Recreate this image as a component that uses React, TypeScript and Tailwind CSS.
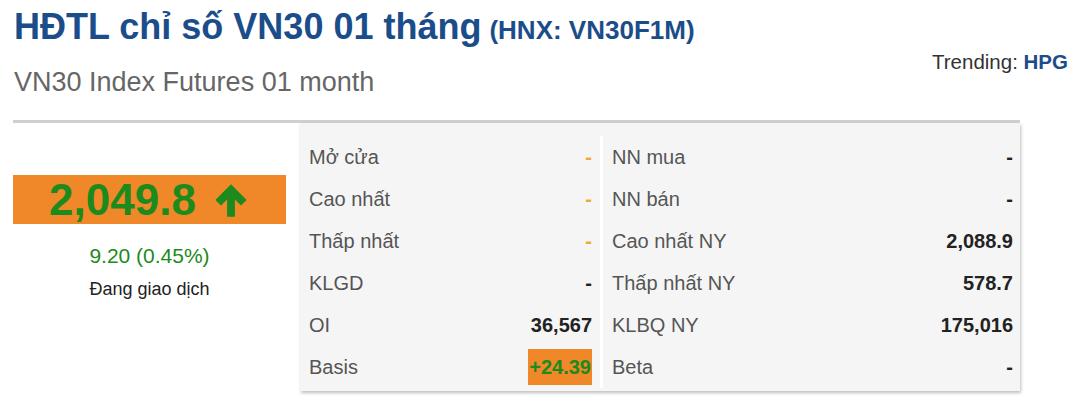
import React from 'react'

const font = { fontFamily: '"Liberation Sans", Arial, sans-serif' }

type Row = { label: string; value: string; kind?: 'orange' | 'basis' }

const leftRows: Row[] = [
  { label: 'Mở cửa', value: '-', kind: 'orange' },
  { label: 'Cao nhất', value: '-', kind: 'orange' },
  { label: 'Thấp nhất', value: '-', kind: 'orange' },
  { label: 'KLGD', value: '-' },
  { label: 'OI', value: '36,567' },
  { label: 'Basis', value: '+24.39', kind: 'basis' },
]

const rightRows: Row[] = [
  { label: 'NN mua', value: '-' },
  { label: 'NN bán', value: '-' },
  { label: 'Cao nhất NY', value: '2,088.9' },
  { label: 'Thấp nhất NY', value: '578.7' },
  { label: 'KLBQ NY', value: '175,016' },
  { label: 'Beta', value: '-' },
]

const Value: React.FC<{ row: Row }> = ({ row }) => {
  if (row.kind === 'orange') return <span className="font-bold text-[#f0a830]">{row.value}</span>
  if (row.kind === 'basis')
    return <span className="bg-[#f0882a] px-[1px] py-[3px] font-bold text-[#1c8a1c]">{row.value}</span>
  return <span className="font-bold text-[#222]">{row.value}</span>
}

const Column: React.FC<{ rows: Row[]; className?: string }> = ({ rows, className }) => (
  <div className={className}>
    {rows.map((r) => (
      <div key={r.label} className="flex h-[42px] items-center justify-between">
        <span className="text-[#555]">{r.label}</span>
        <Value row={r} />
      </div>
    ))}
  </div>
)

const ArrowUp = () => (
  <svg width="38" height="38" viewBox="0 0 34 34" className="ml-[16px]">
    <path d="M17 3 L31 17 L26 22 L20.5 16.5 L20.5 32 L13.5 32 L13.5 16.5 L8 22 L3 17 Z" fill="#1c8a1c" />
  </svg>
)

export default function App() {
  return (
    <div className="h-[406px] w-[1072px] overflow-hidden bg-white" style={font}>
      <div className="flex justify-between pl-[14px] pr-[4px]">
        <div>
          <div className="mt-[6px] flex items-baseline text-[#1b4d8a]">
            <span className="text-[36px] font-bold leading-[42px]">HĐTL chỉ số VN30 01 tháng</span>
            <span className="ml-[8px] text-[26px] font-bold">(HNX: VN30F1M)</span>
          </div>
          <div className="mt-[16px] text-[27px] leading-[32px] text-[#666]">VN30 Index Futures 01 month</div>
        </div>
        <div className="mt-[47px] text-[20.5px] text-[#333]">
          Trending: <span className="font-bold text-[#1b4d8a]">HPG</span>
        </div>
      </div>

      <div className="ml-[13px] mt-[22px] h-[3px] w-[1007px] bg-[#cfcfcf]" />

      <div className="flex">
        <div className="ml-[13px] w-[273px] pt-[52px] text-center">
          <div className="flex h-[49px] items-center justify-center bg-[#f0882a] text-[44px] font-bold text-[#1c8a1c]">
            2,049.8
            <ArrowUp />
          </div>
          <div className="mt-[16px] text-[21px] text-[#1c8a1c]">9.20 (0.45%)</div>
          <div className="mt-[4px] text-[18px] text-[#222]">Đang giao dịch</div>
        </div>

        <div className="ml-[14px] flex w-[720px] bg-[#f5f5f5] pb-[3px] pt-[13px] text-[20px] shadow-[1px_2px_3px_rgba(0,0,0,0.25)]">
          <Column rows={leftRows} className="w-[300px] pl-[9px] pr-[8px]" />
          <div className="w-[3px] bg-white" />
          <Column rows={rightRows} className="flex-1 pl-[9px] pr-[7px]" />
        </div>
      </div>
    </div>
  )
}
